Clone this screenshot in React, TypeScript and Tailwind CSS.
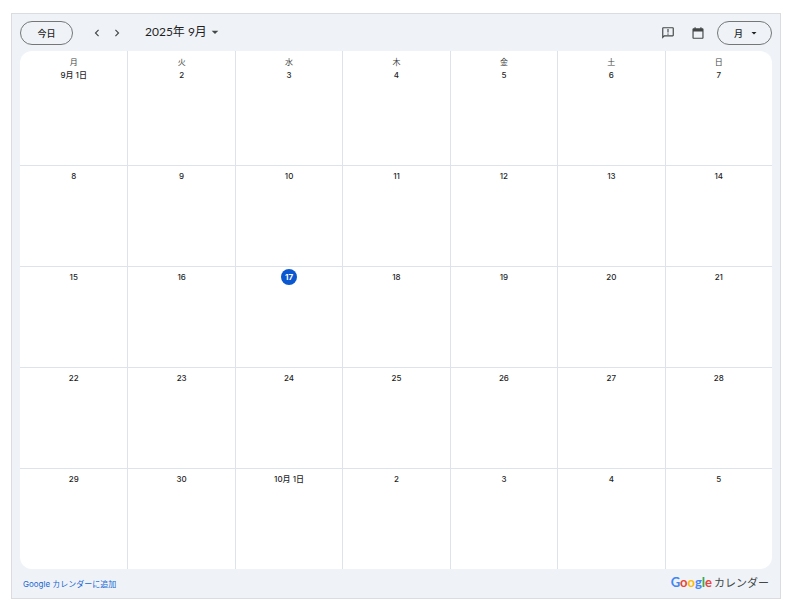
import { useState } from "react";
import clsx from "clsx";

const WEEKDAYS = ["月", "火", "水", "木", "金", "土", "日"];

const WEEKS = [
  ["9月 1日", "2", "3", "4", "5", "6", "7"],
  ["8", "9", "10", "11", "12", "13", "14"],
  ["15", "16", "17", "18", "19", "20", "21"],
  ["22", "23", "24", "25", "26", "27", "28"],
  ["29", "30", "10月 1日", "2", "3", "4", "5"],
];

const TODAY = "17";

function Icon({ d, className }: { d: string; className?: string }) {
  return (
    <svg viewBox="0 0 24 24" fill="currentColor" aria-hidden="true" className={className}>
      <path d={d} />
    </svg>
  );
}

const icons = {
  prev: "M15.41 7.41 14 6l-6 6 6 6 1.41-1.41L10.83 12z",
  next: "M10 6 8.59 7.41 13.17 12l-4.58 4.59L10 18l6-6z",
  dropDown: "M7 10l5 5 5-5z",
  feedback:
    "M20 2H4c-1.1 0-1.99.9-1.99 2L2 22l4-4h14c1.1 0 2-.9 2-2V4c0-1.1-.9-2-2-2zm0 14H5.17L4 17.17V4h16v12zM11 5h2v6h-2zm0 8h2v2h-2z",
  calendar:
    "M19.500 4H18V2h-2v2H8V2H6v2H4.500C3.400 4 2.500 4.900 2.500 6v14c0 1.100.9 2 2 2h15c1.100 0 2-.9 2-2V6c0-1.100-.9-2-2-2zm0 16h-15V9.500h15V20z",
};

function Header() {
  const [view, setView] = useState("month");

  return (
    <header className="flex h-9 items-center">
      <button className="h-6 w-[53px] rounded-full border border-[#747775] pt-0.5 text-[9px] leading-4 font-medium text-[#1f1f1f]">
        今日
      </button>

      {/* Month navigation */}
      <button aria-label="前の月" className="ml-4 flex size-4 items-center justify-center text-[#444746]">
        <Icon d={icons.prev} className="size-3.5" />
      </button>
      <button aria-label="次の月" className="ml-1 flex size-4 items-center justify-center text-[#444746]">
        <Icon d={icons.next} className="size-3.5" />
      </button>
      <button className="ml-5 flex items-center pb-0.5 font-['Lato','Noto_Sans_CJK_JP',sans-serif] text-[12px] leading-4 text-[#1f1f1f]">
        2025年 9月
        <Icon d={icons.dropDown} className="size-4 text-[#444746]" />
      </button>

      {/* Actions */}
      <div className="ml-auto flex items-center text-[#444746]">
        <button aria-label="フィードバック">
          <Icon d={icons.feedback} className="size-3.5" />
        </button>
        <button aria-label="カレンダー" className="ml-4">
          <Icon d={icons.calendar} className="size-3.5" />
        </button>
        <div className="relative ml-3 flex items-center text-[#1f1f1f]">
          <select
            aria-label="表示"
            value={view}
            onChange={(e) => setView(e.target.value)}
            className="h-6 w-[55px] appearance-none rounded-full border border-[#747775] bg-transparent pt-0.5 pl-4 text-[9px] font-medium"
          >
            <option value="week">週</option>
            <option value="month">月</option>
            <option value="agenda">予定リスト</option>
          </select>
          <Icon d={icons.dropDown} className="pointer-events-none absolute right-3 size-3" />
        </div>
      </div>
    </header>
  );
}

function MonthGrid() {
  return (
    <div className="overflow-hidden rounded-xl bg-white">
      <table className="w-full table-fixed border-separate border-spacing-0 text-center text-[8px] leading-3 text-[#1f1f1f]">
        <thead>
          <tr>
            {WEEKDAYS.map((day) => (
              <th key={day} scope="col" className="h-[17px] border-l border-[#dde3ea] p-0 align-bottom font-normal text-[#444746] first:border-l-0">
                {day}
              </th>
            ))}
          </tr>
        </thead>
        <tbody>
          {WEEKS.map((week, row) => (
            <tr key={row} className="group">
              {week.map((date) => (
                <td
                  key={date}
                  className={clsx(
                    "border-b border-l border-[#dde3ea] p-0 align-top font-medium first:border-l-0 group-last:h-[100px] group-last:border-b-0",
                    row === 0 ? "h-[98px]" : "h-[101px] pt-0.5"
                  )}
                >
                  <span
                    className={clsx(
                      "inline-flex items-center justify-center",
                      row === 0 ? "h-3.5" : "h-4",
                      date === TODAY && "w-4 rounded-full bg-[#0b57d0] font-bold text-white"
                    )}
                  >
                    {date}
                  </span>
                </td>
              ))}
            </tr>
          ))}
        </tbody>
      </table>
    </div>
  );
}

function Footer() {
  return (
    <footer className="flex h-[29px] items-center justify-between px-[3px]">
      <a href="#add" className="text-[8px] text-[#1967d2]">
        Google カレンダーに追加
      </a>
      <div className="flex items-baseline gap-0.5 pb-0.5 leading-4 text-[#444746]">
        <span className="font-[Lato] text-[13px] font-bold">
          <span className="text-[#4285f4]">G</span>
          <span className="text-[#ea4335]">o</span>
          <span className="text-[#fbbc04]">o</span>
          <span className="text-[#4285f4]">g</span>
          <span className="text-[#34a853]">l</span>
          <span className="text-[#ea4335]">e</span>
        </span>
        <span className="text-[11px]">カレンダー</span>
      </div>
    </footer>
  );
}

export default function App() {
  return (
    <main className="mt-[13px] mr-1.5 mb-2 ml-[11px] border border-[#dadce0] bg-[#eff3f8] px-2 pt-px font-['Inter','Noto_Sans_CJK_JP',sans-serif]">
      <Header />
      <MonthGrid />
      <Footer />
    </main>
  );
}
